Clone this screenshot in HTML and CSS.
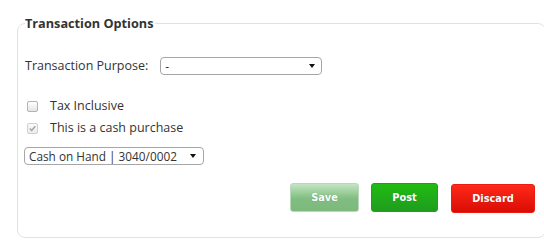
FILE: index.html
```html
<!DOCTYPE html>
<html>
<head>
<meta charset="utf-8">
<link rel="stylesheet" href="styles.css">
</head>
<body>
<div class="wrap">
  <fieldset class="panel">
    <legend class="panel-title">Transaction Options</legend>
    <div class="row purpose-row">
      <label class="field-label" for="purpose">Transaction Purpose:</label>
      <div class="select-box purpose-select">
        <select id="purpose" class="select"><option>-</option></select>
      </div>
    </div>
    <label class="check-row first">
      <input type="checkbox" class="check">
      <span>Tax Inclusive</span>
    </label>
    <label class="check-row">
      <input type="checkbox" class="check" checked disabled>
      <span>This is a cash purchase</span>
    </label>
    <div class="select-box account-select">
      <select class="select"><option>Cash on Hand | 3040/0002</option></select>
    </div>
    <div class="actions">
      <button class="btn btn-save">Save</button>
      <button class="btn btn-post">Post</button>
      <button class="btn btn-discard">Discard</button>
    </div>
  </fieldset>
</div>
</body>
</html>
```
FILE: styles.css
```css
html, body {
  margin: 0;
  padding: 0;
  background: #fff;
}
body {
  font-family: "Open Sans", "Liberation Sans", sans-serif;
  font-size: 12.5px;
  color: #333;
  overflow: hidden;
}
.wrap {
  padding: 14px 0 0 17px;
}
.panel {
  box-sizing: border-box;
  width: 529px;
  height: 224px;
  margin: 0;
  padding: 0 0 0 7px;
  border: 1px solid #e2e2e2;
  border-radius: 8px;
  min-width: 0;
}
.panel-title {
  font-weight: 700;
  font-size: 12.7px;
  line-height: 18px;
  padding: 0 2px 0 0;
  margin-left: 0;
  color: #333;
}
.row {
  display: flex;
  align-items: center;
}
.purpose-row {
  height: 18px;
  margin-top: 25px;
}
.field-label {
  line-height: 18px;
  margin-right: 12px;
}
.select-box {
  position: relative;
  box-sizing: border-box;
  height: 18px;
  border: 1px solid #a6a6a6;
  border-radius: 4px;
  background: #fff;
}
.select-box::after {
  content: "";
  position: absolute;
  top: 6px;
  right: 6px;
  border-left: 3px solid transparent;
  border-right: 3px solid transparent;
  border-top: 4px solid #111;
  pointer-events: none;
}
.purpose-select {
  width: 162px;
}
.select {
  appearance: none;
  -webkit-appearance: none;
  border: 0;
  background: transparent;
  width: 100%;
  height: 16px;
  margin: 0;
  padding: 0 0 0 4px;
  font-family: "Open Sans", "Liberation Sans", sans-serif;
  font-size: 12px;
  line-height: 16px;
  color: #333;
  outline: none;
}
.check-row {
  display: flex;
  align-items: center;
  height: 18px;
  margin-top: 4px;
  line-height: 18px;
}
.check-row.first {
  margin-top: 22px;
}
.check {
  appearance: none;
  -webkit-appearance: none;
  box-sizing: border-box;
  width: 11px;
  height: 11px;
  margin: 0 12px 0 2px;
  border: 1px solid #b3b3b3;
  border-radius: 2px;
  background: linear-gradient(#ffffff, #e4e4e4);
}
.check:checked {
  background-image: url("data:image/svg+xml;utf8,<svg xmlns='http://www.w3.org/2000/svg' viewBox='0 0 9 9'><path d='M1.8 4.6 L3.7 6.5 L7.3 2.3' fill='none' stroke='%23a0a0a0' stroke-width='1.4'/></svg>"), linear-gradient(#fbfbfb, #ececec);
  background-size: 100% 100%, 100% 100%;
}
.check:disabled {
  border-color: #cfcfcf;
}
.account-select {
  width: 180px;
  margin-top: 10px;
  margin-left: -1px;
}
.account-select::after {
  right: 7px;
}
.account-select .select {
  padding-left: 4px;
  font-size: 11.8px;
}
.actions {
  display: flex;
  justify-content: flex-end;
  gap: 12px;
  margin-top: 18px;
  padding-right: 10px;
}
.btn {
  box-sizing: border-box;
  height: 29px;
  padding: 0;
  border-radius: 3px;
  font-family: "DejaVu Sans", Verdana, sans-serif;
  font-weight: 700;
  font-size: 9.8px;
  color: #fff;
  text-shadow: 0 0 1px rgba(0, 0, 0, 0.25);
  cursor: pointer;
}
.btn-save {
  width: 69px;
  border: 1px solid #b9d8b9;
  background: linear-gradient(#c3e5c3, #80bd80 55%, #7db97d);
}
.btn-post {
  width: 67px;
  border: 1px solid #1f9e1f;
  background: linear-gradient(#22bb12, #1e9d1e);
}
.btn-discard {
  width: 84px;
  margin-left: 1px;
  margin-top: 1px;
  border: 1px solid #e81d10;
  background: linear-gradient(#ff2a18, #d90c06);
}
```
